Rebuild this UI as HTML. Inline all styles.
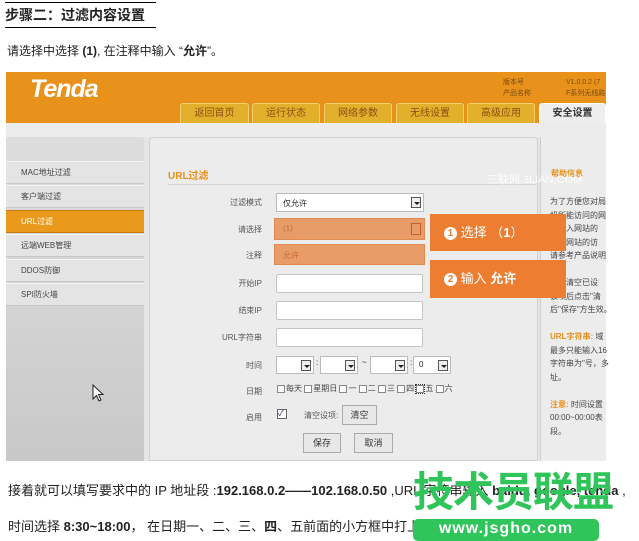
<!DOCTYPE html>
<html><head><meta charset="utf-8"><style>
*{margin:0;padding:0;box-sizing:border-box}
body{width:639px;height:538px;background:#fff;position:relative;overflow:hidden;font-family:"Liberation Sans","Noto Sans CJK SC",sans-serif;color:#222}
.a{position:absolute;white-space:nowrap}
.tab{position:absolute;top:103px;height:20px;background:#e3b02c;border:1px solid #f2cf6a;border-bottom:none;border-radius:3px 3px 0 0;font-size:10px;color:#8a5010;text-align:center;line-height:20px}
.mi{position:absolute;left:6px;width:138px;height:23px;background:#e4e4e4;border-bottom:1px solid #c8c8c8;border-top:1px solid #f4f4f4;font-size:8px;color:#444;line-height:22px;padding-left:15px}
.lb{position:absolute;width:80px;left:182px;text-align:right;font-size:8px;color:#555}
.in{position:absolute;left:276px;width:147px;height:19px;background:#fff;border:1px solid #c4c4c4;border-radius:2px}
.sel{position:absolute;height:18px;background:#fff;border:1px solid #bbb}
.sel i{position:absolute;right:2px;top:3px;width:10px;height:11px;border:1px solid #555;background:#eee}
.sel i:after{content:"";position:absolute;left:2px;top:4px;border:3px solid transparent;border-top:3px solid #222}
.cb{display:inline-block;width:8px;height:8px;border:1px solid #888;background:#fff;vertical-align:middle;margin-right:1px}
.rt{position:absolute;left:550px;font-size:8px;color:#444}
.btn{position:absolute;top:433px;height:20px;background:#e8e8e8;border:1px solid #aaa;font-size:9px;line-height:18px;text-align:center;color:#333}
</style></head><body>
<div class="a" style="left:5px;top:2px;width:151px;height:26px;border-top:1px solid #000;border-bottom:1px solid #000;font-size:14px;font-weight:bold;line-height:24px">步骤二：过滤内容设置</div>
<div class="a" style="left:7px;top:42px;font-size:12px">请选择中选择 <b>(1)</b>, 在注释中输入 “<b>允许</b>”。</div>

<div class="a" style="left:6px;top:72px;width:600px;height:389px;background:#e6e6e6"></div>
<div class="a" style="left:6px;top:72px;width:600px;height:51px;background:#e8921b"></div>
<div class="a" style="left:30px;top:75px;font-size:25px;font-weight:bold;font-style:italic;color:#fff;letter-spacing:-1px">Tenda</div>
<div class="a" style="left:503px;top:77px;font-size:7px;color:#7a4a10;line-height:11px">版本号<br>产品名称</div>
<div class="a" style="left:566px;top:77px;font-size:7px;color:#7a4a10;line-height:11px">V1.0.0.2 (7<br>F系列无线路</div>
<div class="tab" style="left:180px;width:69px">返回首页</div>
<div class="tab" style="left:252px;width:68px">运行状态</div>
<div class="tab" style="left:324px;width:68px">网络参数</div>
<div class="tab" style="left:396px;width:68px">无线设置</div>
<div class="tab" style="left:467px;width:68px">高级应用</div>
<div class="tab" style="left:539px;width:67px;background:#eee;border-color:#fff;color:#333;font-weight:bold">安全设置</div>
<div class="a" style="left:6px;top:123px;width:600px;height:14px;background:#ececec"></div>

<div class="a" style="left:6px;top:137px;width:138px;height:324px;background:linear-gradient(#e0e0e0,#c8c8c8)"></div>
<div class="a" style="left:6px;top:137px;width:138px;height:23px;background:#dcdcdc;border-radius:3px 3px 0 0"></div>
<div class="mi" style="top:161px">MAC地址过滤</div>
<div class="mi" style="top:185px">客户端过滤</div>
<div class="mi" style="top:210px;background:#e99a1c;color:#fff;border-color:#c77a10">URL过滤</div>
<div class="mi" style="top:234px">远端WEB管理</div>
<div class="mi" style="top:259px">DDOS防御</div>
<div class="mi" style="top:283px">SPI防火墙</div>
<svg class="a" style="left:92px;top:384px" width="12" height="19" viewBox="0 0 12 19"><path d="M1 1V15L4.5 11.5L7 17L9 16L6.5 10.5H11Z" fill="#fff" stroke="#222" stroke-width="1"/></svg>

<div class="a" style="left:149px;top:137px;width:389px;height:324px;background:#ececec;border:1px solid #d0d0d0;border-radius:4px 4px 0 0"></div>
<div class="a" style="left:168px;top:167px;font-size:10px;font-weight:bold;color:#e8901a">URL过滤</div>
<div class="a" style="left:168px;top:184px;width:368px;height:1px;background:#d4d4d4"></div>

<div class="lb" style="top:197px">过滤模式</div>
<div class="sel" style="left:276px;top:193px;width:148px;height:19px;font-size:8px;padding:4px 6px">仅允许<i></i></div>
<div class="lb" style="top:224px">请选择</div>
<div class="a" style="left:274px;top:218px;width:151px;height:22px;background:#e89c68;border:1px solid #e08a50;font-size:8px;color:#c86a30;padding:5px 8px">(1)<span style="position:absolute;right:3px;top:4px;width:10px;height:12px;border:1px solid #c06030"></span></div>
<div class="lb" style="top:250px">注释</div>
<div class="a" style="left:274px;top:244px;width:151px;height:21px;background:#e89c68;border:1px solid #e08a50;font-size:8px;color:#c86a30;padding:5px 8px">允许</div>
<div class="lb" style="top:278px">开始IP</div><div class="in" style="top:274px"></div>
<div class="lb" style="top:305px">结束IP</div><div class="in" style="top:301px"></div>
<div class="lb" style="top:332px">URL字符串</div><div class="in" style="top:328px"></div>
<div class="lb" style="top:360px">时间</div>
<div class="sel" style="left:276px;top:356px;width:38px"><i></i></div>
<div class="a" style="left:316px;top:358px;font-size:8px">:</div>
<div class="sel" style="left:320px;top:356px;width:38px"><i></i></div>
<div class="a" style="left:362px;top:358px;font-size:8px">~</div>
<div class="sel" style="left:370px;top:356px;width:38px"><i></i></div>
<div class="a" style="left:410px;top:358px;font-size:8px">:</div>
<div class="sel" style="left:413px;top:356px;width:38px;font-size:8px;padding:3px 5px">0<i></i></div>
<div class="lb" style="top:386px">日期</div>
<div class="a" style="left:277px;top:383px;font-size:8px;color:#444"><span class="cb"></span>每天 <span class="cb"></span>星期日 <span class="cb"></span>一 <span class="cb"></span>二 <span class="cb"></span>三 <span class="cb"></span>四 <span class="cb" style="outline:1px dotted #333"></span>五 <span class="cb"></span>六</div>
<div class="lb" style="top:412px">启用</div>
<div class="a" style="left:277px;top:409px;width:10px;height:10px;border:1px solid #666;background:#fff;font-size:8px;line-height:8px;color:#225">✓</div>
<div class="a" style="left:304px;top:410px;font-size:8px;color:#555">清空设项:</div>
<div class="btn" style="left:342px;top:405px;width:35px">清空</div>
<div class="btn" style="left:303px;width:38px">保存</div>
<div class="btn" style="left:354px;width:39px">取消</div>

<div class="a" style="left:540px;top:137px;width:66px;height:324px;background:#ececec;border-left:1px solid #ccc"></div>
<div class="a" style="left:551px;top:168px;font-size:8px;font-weight:bold;color:#e8901a">帮助信息</div>
<div class="a" style="left:487px;top:171px;font-size:11px;color:#fff;opacity:.9">三联网 3LIAN.COM</div>
<div class="rt" style="top:195px;line-height:13.5px">为了方便您对局<br>机所能访问的网<br>过输入网站的<br>些遍网站的访<br>请参考产品说明<br><br>需要清空已设<br>该项后点击"清<br>后"保存"方生效。<br><br><b style="color:#e8901a">URL字符串:</b> 域<br>最多只能输入16<br>字符串为"号，多<br>址。<br><br><b style="color:#e8901a">注意:</b> 时间设置<br>00:00~00:00表<br>段。</div>

<div class="a" style="left:430px;top:214px;width:136px;height:37px;background:#ec7d31;color:#fff;font-size:13px;line-height:37px;padding-left:14px"><span style="display:inline-block;width:13px;height:13px;border-radius:50%;background:#fff;color:#ec7d31;font-size:10px;line-height:13px;text-align:center;font-weight:bold;vertical-align:1px">1</span> 选择 （<b>1</b>）</div>
<div class="a" style="left:430px;top:260px;width:136px;height:38px;background:#ec7d31;color:#fff;font-size:13px;line-height:38px;padding-left:14px"><span style="display:inline-block;width:13px;height:13px;border-radius:50%;background:#fff;color:#ec7d31;font-size:10px;line-height:13px;text-align:center;font-weight:bold;vertical-align:1px">2</span> 输入 <b>允许</b></div>

<div class="a" style="left:8px;top:480px;font-size:13px">接着就可以填写要求中的 IP 地址段 :<b>192.168.0.2——102.168.0.50</b> ,URL 字符串输入 <b>baidu, google, tenda</b> ,</div>
<div class="a" style="left:8px;top:516px;font-size:13px">时间选择 <b>8:30~18:00</b>， 在日期一、二、三、<b>四</b>、五前面的小方框中打上</div>
<div class="a" style="left:413px;top:464px;font-size:41px;font-weight:bold;color:#2fc55a;letter-spacing:-1px;line-height:48px;font-family:'Noto Sans CJK SC',sans-serif">技术员联盟</div>
<div class="a" style="left:413px;top:519px;width:186px;height:22px;background:#2fc55a;border-radius:5px;color:#fff;font-size:16px;font-weight:bold;text-align:center;line-height:19px;letter-spacing:1px">www.jsgho.com</div>
</body></html>
